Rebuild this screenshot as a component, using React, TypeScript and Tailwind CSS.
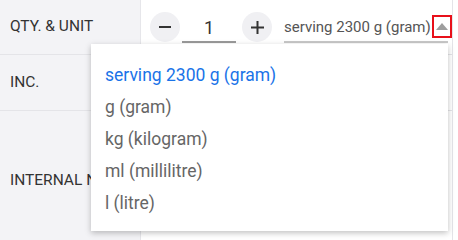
import React from 'react';

const UNITS = ['serving 2300 g (gram)', 'g (gram)', 'kg (kilogram)', 'ml (millilitre)', 'l (litre)'];

export default function App() {
  return (
    <div className="relative w-[458px] h-[240px] overflow-hidden bg-white font-['Roboto',sans-serif]">
      <div className="flex h-full w-[453px] border-r border-[#e4e4e8]">
        {/* label column */}
        <div className="flex w-[141px] shrink-0 flex-col bg-[#f3f3f6] text-[15.5px] text-[#333] border-r border-[#e6e6ea]">
          <div className="flex h-[55px] shrink-0 items-center border-b border-[#e4e4e8] pl-[10px]">QTY. &amp; UNIT</div>
          <div className="flex h-[56px] shrink-0 items-center border-b border-[#e4e4e8] pl-[10px]">INC.</div>
          <div className="flex h-[140px] shrink-0 items-center pl-[10px] whitespace-nowrap">INTERNAL NOTES</div>
        </div>

        {/* values column */}
        <div className="flex flex-1 flex-col">
          <div className="flex h-[55px] shrink-0 items-center border-b border-[#e4e4e8] pl-[9px]">
            <button className="flex h-[30px] w-[30px] items-center justify-center rounded-full bg-[#f0f0f3] text-[#333]">
              <svg width="12" height="2" viewBox="0 0 12 2"><rect width="12" height="2" fill="currentColor" /></svg>
            </button>
            <div className="ml-[2px] flex h-[30px] w-[54px] items-center justify-center border-b-2 border-[#9a9a9a] text-[18px] text-[#333] mt-[2px]">1</div>
            <button className="ml-[6px] flex h-[30px] w-[30px] items-center justify-center rounded-full bg-[#f0f0f3] text-[#333]">
              <svg width="13" height="13" viewBox="0 0 13 13"><rect y="5.5" width="13" height="2" fill="currentColor" /><rect x="5.5" width="2" height="13" fill="currentColor" /></svg>
            </button>
            <div className="ml-[12px] flex h-[30px] w-[164px] items-center border-b-2 border-[#c8c8c8] mt-[2px]">
              <span className="text-[15px] text-[#555] whitespace-nowrap">serving 2300 g (gram)</span>
              <span className="ml-auto mr-[-4px] flex h-[23px] w-[20px] shrink-0 items-center justify-center border-2 border-[#e8101a] mb-[1px]">
                <svg width="12" height="7" viewBox="0 0 12 7"><polygon points="6,0 12,7 0,7" fill="#9e9e9e" /></svg>
              </span>
            </div>
          </div>
          <div className="h-[56px] shrink-0 border-b border-[#e4e4e8]" />
          <div className="flex-1" />
        </div>
      </div>

      {/* dropdown menu */}
      <div className="absolute left-[91px] top-[44px] w-[357px] h-[187px] bg-white pt-[15px] shadow-[0_2px_6px_rgba(0,0,0,0.25)]">
        {UNITS.map((u, i) => (
          <div
            key={u}
            className={`flex h-[32px] items-center pl-[14px] text-[17.5px] ${i === 0 ? 'text-[#1a73e8]' : 'text-[#666]'}`}
          >
            {u}
          </div>
        ))}
      </div>
    </div>
  );
}
